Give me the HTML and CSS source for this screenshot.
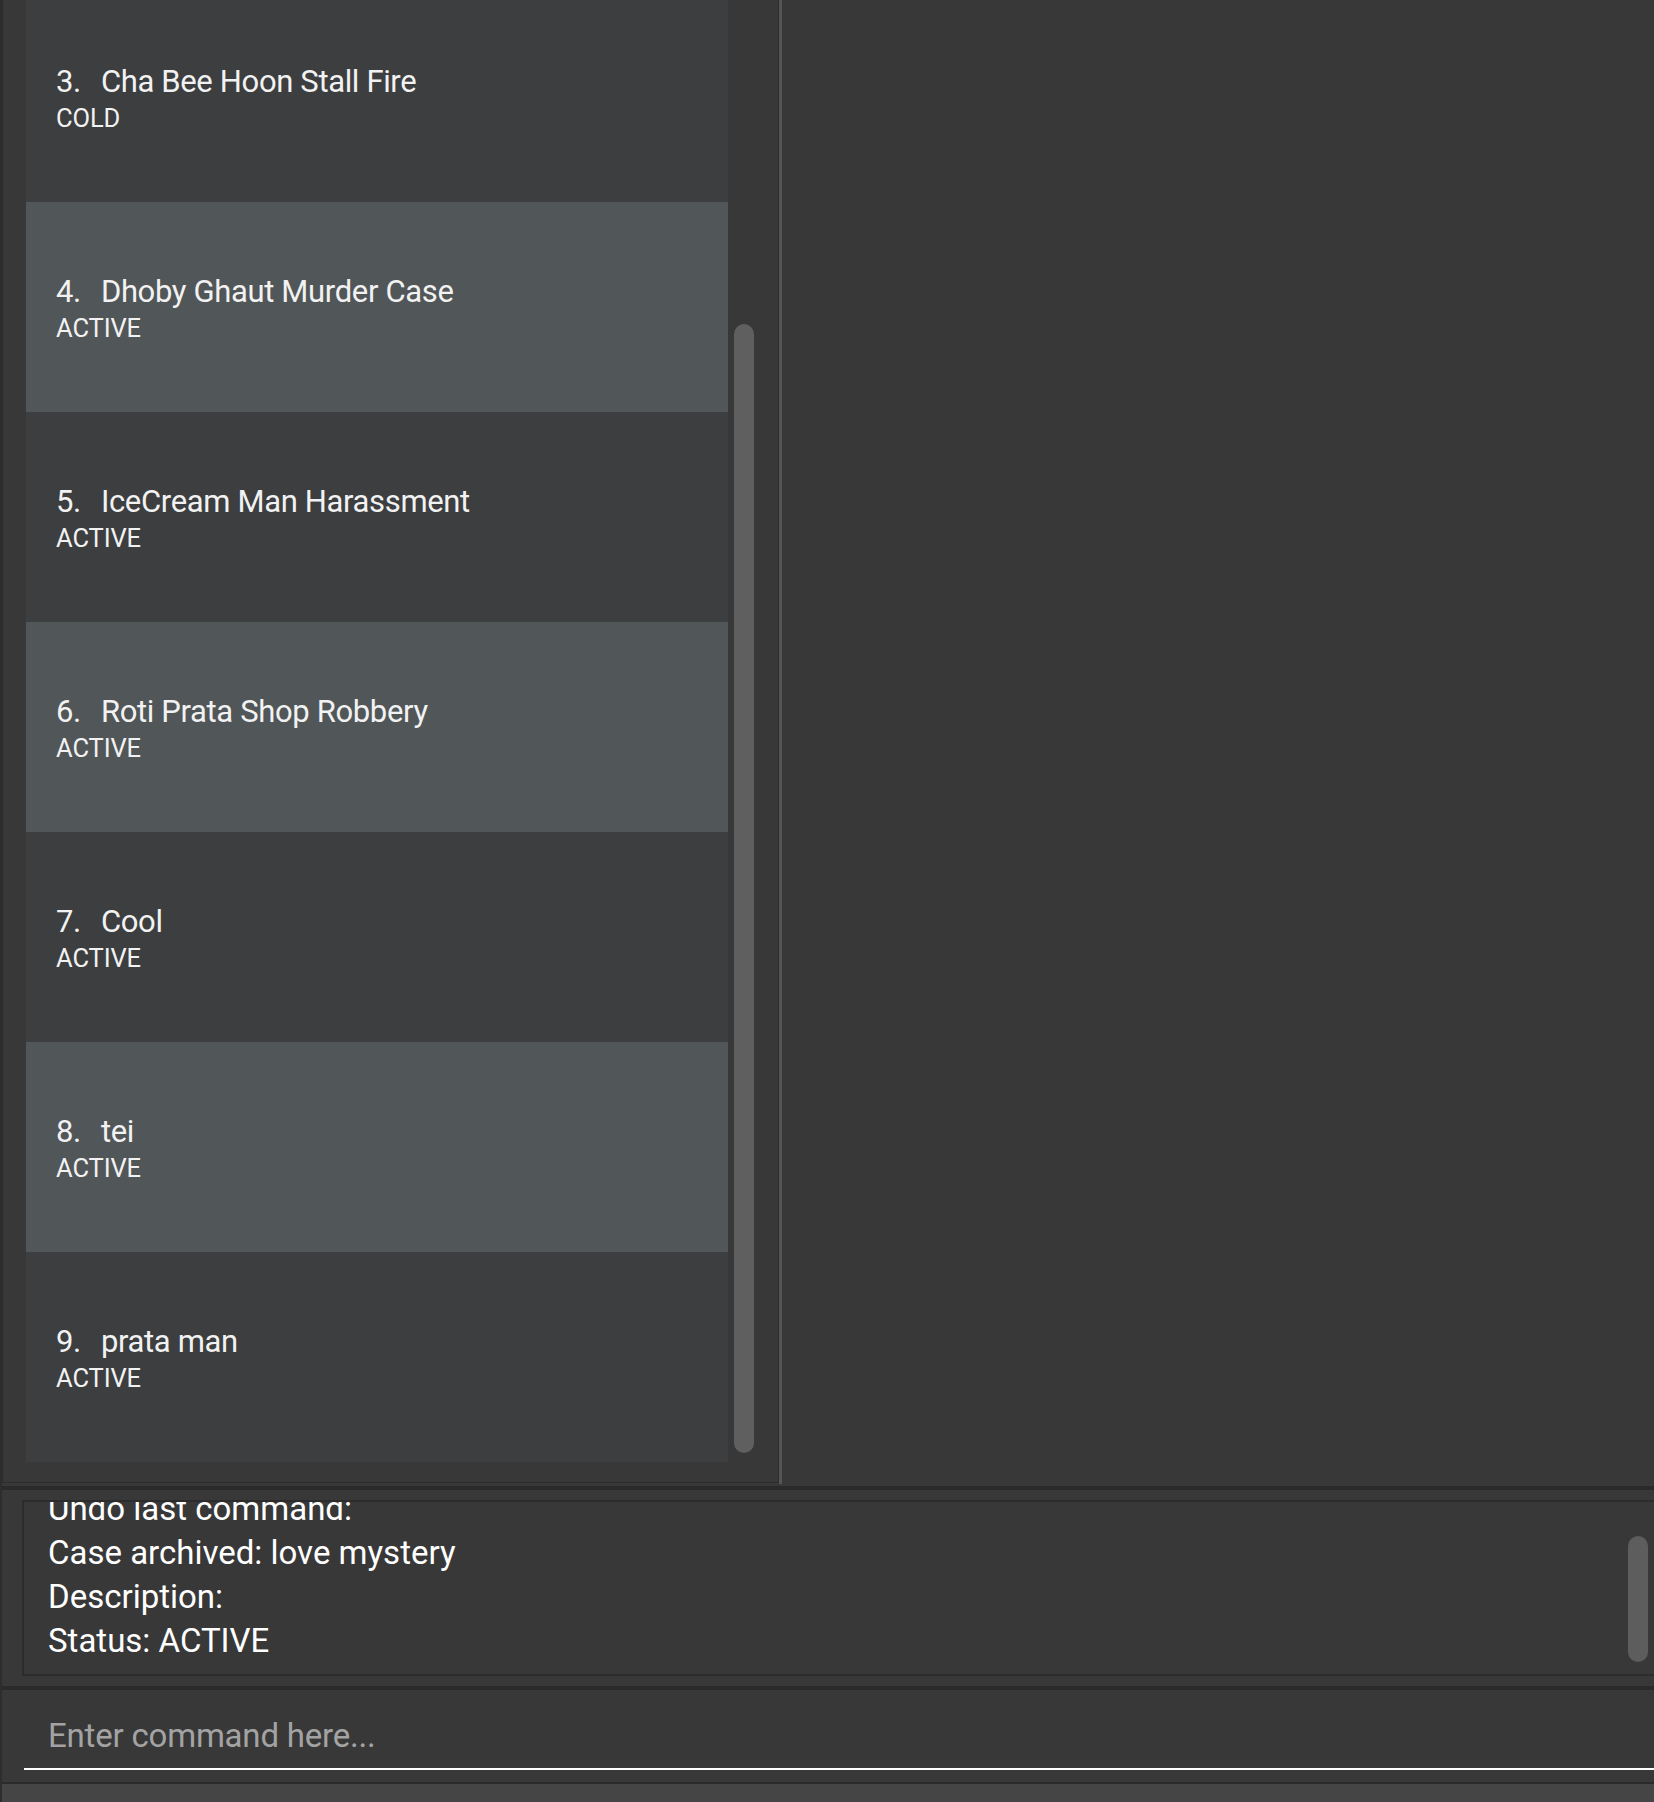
FILE: index.html
```html
<!DOCTYPE html>
<html lang="en">
<head>
<meta charset="utf-8">
<title>Case List</title>
<link rel="stylesheet" href="styles.css">
</head>
<body>
<div class="app">
  <div class="main">
    <div class="list-panel">
      <div class="list-view">
        <div class="cells">
          <div class="cells-inner">
            <div class="cell odd"><div class="title"><span class="id">3.</span>Cha Bee Hoon Stall Fire</div><div class="status">COLD</div></div>
            <div class="cell even"><div class="title"><span class="id">4.</span>Dhoby Ghaut Murder Case</div><div class="status">ACTIVE</div></div>
            <div class="cell odd"><div class="title"><span class="id">5.</span>IceCream Man Harassment</div><div class="status">ACTIVE</div></div>
            <div class="cell even"><div class="title"><span class="id">6.</span>Roti Prata Shop Robbery</div><div class="status">ACTIVE</div></div>
            <div class="cell odd"><div class="title"><span class="id">7.</span>Cool</div><div class="status">ACTIVE</div></div>
            <div class="cell even"><div class="title"><span class="id">8.</span>tei</div><div class="status">ACTIVE</div></div>
            <div class="cell odd"><div class="title"><span class="id">9.</span>prata man</div><div class="status">ACTIVE</div></div>
          </div>
        </div>
        <div class="vtrack"><div class="vthumb list-thumb"></div></div>
      </div>
    </div>
    <div class="divider"></div>
    <div class="detail"></div>
  </div>
  <div class="sep"></div>
  <div class="result-area">
    <div class="result-box">
      <div class="result-text">
        <div class="rline">Undo last command:</div>
        <div class="rline">Case archived: love mystery</div>
        <div class="rline">Description:</div>
        <div class="rline">Status: ACTIVE</div>
      </div>
      <div class="vtrack result-track"><div class="vthumb result-thumb"></div></div>
    </div>
  </div>
  <div class="sep"></div>
  <div class="command-area">
    <div class="command-field"><span class="prompt">Enter command here...</span></div>
  </div>
  <div class="thin-line"></div>
  <div class="status-bar"></div>
</div>
</body>
</html>
```

FILE: styles.css
```css
html, body {
  margin: 0;
  padding: 0;
  background: #383838;
}

.app {
  width: 1654px;
  height: 1802px;
  box-sizing: border-box;
  border-left: 2px solid #2d2d2d;
  background: #383838;
  display: flex;
  flex-direction: column;
  overflow: hidden;
  font-family: Roboto, "Liberation Sans", sans-serif;
  color: #ffffff;
}

.main {
  display: flex;
  height: 1486px;
  flex: none;
}

.list-panel {
  width: 777px;
  flex: none;
  height: 1483px;
}

.list-view {
  box-sizing: border-box;
  height: 1483px;
  border-left: 1px solid #2c2c2c;
  border-right: 1px solid #2c2c2c;
  border-bottom: 1px solid #2c2c2c;
  padding: 0 24px 0 23px;
  display: flex;
  gap: 6px;
  background: #383838;
}

.cells {
  width: 702px;
  flex: none;
  overflow: hidden;
  height: 1462px;
}

.cells-inner {
  margin-top: -8px;
}

.cell {
  height: 210px;
  box-sizing: border-box;
  padding-left: 30px;
  display: flex;
  flex-direction: column;
  justify-content: center;
}

.cell.odd { background: #3c3e3f; }
.cell.even { background: #515658; }

.title {
  font-size: 31px;
  line-height: 38px;
  letter-spacing: -0.35px;
  color: #f2f2f2;
  white-space: nowrap;
  margin-top: 2px;
}

.id {
  margin-right: 20px;
}

.status {
  font-size: 25.5px;
  line-height: 30px;
  margin-top: 2px;
  color: #f2f2f2;
  letter-spacing: -0.1px;
}

.vtrack {
  width: 20px;
  flex: none;
}

.vthumb {
  width: 20px;
  border-radius: 10px;
  background: #5f5f5f;
}

.list-thumb {
  margin-top: 324px;
  height: 1129px;
}

.divider {
  width: 3px;
  height: 1484px;
  background: #555555;
  flex: none;
}

.detail {
  flex: 1;
  background: #383838;
}

.sep {
  height: 4px;
  background: #2a2a2a;
  flex: none;
}

.result-area {
  height: 196px;
  flex: none;
  box-sizing: border-box;
  padding: 10px 0 10px 20px;
  display: flex;
}

.result-box {
  flex: 1;
  margin-right: -30px;
  box-sizing: border-box;
  height: 176px;
  border: 2px solid #2c2c2c;
  display: flex;
  padding-right: 34px;
  overflow: hidden;
}

.result-text {
  flex: 1;
  padding-left: 24px;
  margin-top: -15px;
  font-size: 33px;
  line-height: 44px;
  color: #ffffff;
}

.result-thumb {
  margin-top: 34px;
  height: 126px;
  background: #5d5d5d;
}

.command-area {
  height: 92px;
  flex: none;
  box-sizing: border-box;
  padding: 0 0 0 22px;
}

.command-field {
  margin-top: 24px;
  height: 56px;
  box-sizing: border-box;
  border-bottom: 2px solid #ffffff;
  padding-left: 24px;
  font-size: 33px;
  line-height: 44px;
}

.prompt {
  color: #a3a3a3;
  letter-spacing: -0.2px;
}

.thin-line {
  height: 2px;
  background: #2a2a2a;
  flex: none;
}

.status-bar {
  flex: 1;
  background: #454545;
}
```
